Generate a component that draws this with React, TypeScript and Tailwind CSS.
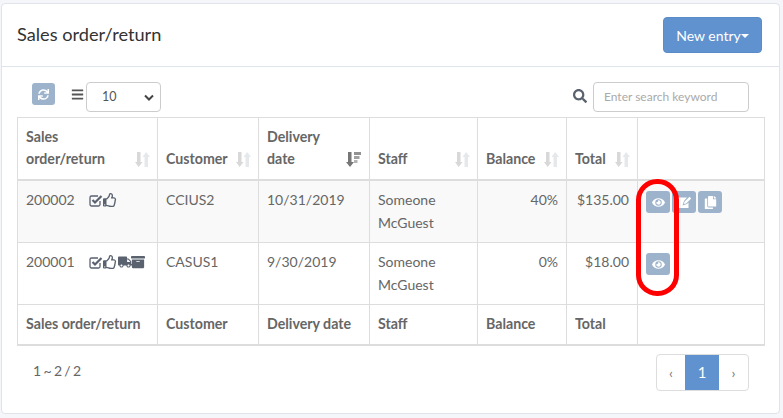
import { FaArchive, FaBars, FaCopy, FaEye, FaRegThumbsUp, FaSearch, FaSync, FaTruck } from "react-icons/fa";

function SortIcon({ active }: { active?: boolean }) {
  if (active) {
    return (
      <svg width="15" height="15" viewBox="0 0 15 15" className="absolute right-[8px] bottom-[12px]" fill="#777">
        <path d="M2 0h3.500v10H8l-4 5-4-5h2z" />
        <path d="M8 0h7v3H8z" opacity="0.8" />
        <path d="M8 4h5.500v3H8z" opacity="0.7" />
        <path d="M8 8h3.500v3H8z" opacity="0.55" />
      </svg>
    );
  }
  return (
    <svg width="15" height="15" viewBox="0 0 15 15" className="absolute right-[7px] bottom-[12px]">
      <path d="M2 0h3.500v10H7.500l-3.800 5L0 10h2z" fill="#d8d8d8" />
      <path d="M9.500 15H13V5h2l-3.800-5L7.500 5h2z" fill="#e6e9eb" />
    </svg>
  );
}

function HeadCell({ children, active }: { children: React.ReactNode; active?: boolean }) {
  return (
    <th className="relative border border-[#ddd] border-b-2 px-2 pb-[9px] pt-2 align-bottom text-left text-[14.2px] font-bold leading-[22px] text-[#666]">
      {children}
      <SortIcon active={active} />
    </th>
  );
}

function ActionButton({ children }: { children: React.ReactNode }) {
  return (
    <span className="mr-[2px] inline-flex h-[22px] w-[24px] items-center justify-center rounded-[3px] bg-[#9db3cb] text-[13px] text-white">
      {children}
    </span>
  );
}

function CheckBox() {
  return (
    <svg width="14" height="13" viewBox="0 0 14 13" fill="none" stroke="#5a6270">
      <path d="M11 7v3.500a1.500 1.500 0 0 1-1.500 1.500h-7A1.500 1.500 0 0 1 1 10.500v-7A1.500 1.500 0 0 1 2.500 2H9" strokeWidth="1.300" />
      <path d="M3.500 6l2.500 2.500L12.500 2" strokeWidth="2.200" />
    </svg>
  );
}

function EditGlyph() {
  return (
    <svg width="15" height="13" viewBox="0 0 15 13" fill="#fff">
      <path d="M1 1.500h9L7 5 5.500 9.500 10 8l1.500-1.500V12H1z" />
      <path d="M6.800 8l.7-2.300L12.500.7l1.700 1.700-5 5z" />
    </svg>
  );
}

const cell = "border border-[#ddd] px-2 py-[8px] align-top text-[14px] leading-[22.500px] text-[#666]";
const foot = "border border-[#ddd] border-b-2 px-2 py-2 text-left text-[14.2px] font-bold leading-[22px] text-[#666]";

export default function App() {
  return (
    <div className="h-[418px] overflow-hidden bg-[#f4f6f9] pl-[1px] pt-[3px] font-['Lato',sans-serif]">
      <div className="h-[411px] w-[779px] rounded-[4px] border border-[#dfe4ea] bg-white">
        <div className="flex h-[63px] items-center justify-between border-b border-[#dfe4ea] pl-[15px] pr-[17px]">
          <h1 className="text-[18.200px] font-normal text-[#333]">Sales order/return</h1>
          <button className="flex h-[36px] w-[99px] items-center justify-center rounded-[4px] border border-[#5b8cc7] bg-[#6092cf] text-[14px] text-white">
            New entry
            <span className="mt-[1px] h-0 w-0 border-x-[4px] border-t-[4px] border-x-transparent border-t-white" />
          </button>
        </div>
        <div className="px-[15px]">
          <div className="flex h-[50px] items-start justify-between px-[15px] pt-[15px]">
            <div className="flex items-start">
              <span className="mt-[1px] flex h-[22px] w-[23px] items-center justify-center rounded-[3px] bg-[#9db3cb] text-[11px] text-white">
                <FaSync />
              </span>
              <FaBars className="ml-[16px] mt-[6px] text-[13px] text-[#555]" />
              <div className="ml-[2px] flex h-[30px] w-[75px] items-center justify-between rounded-[4px] border border-[#ccc] bg-white pl-[15px] pr-[5px] pt-[1px] text-[12.500px] text-[#555]">
                10
                <svg width="12" height="8" viewBox="0 0 12 8" fill="none" stroke="#444" strokeWidth="2"><path d="M2 1.500l4 4 4-4" /></svg>
              </div>
            </div>
            <div className="flex items-start">
              <FaSearch className="mr-[6px] mt-[7px] text-[14px] text-[#5a6270]" />
              <div className="flex h-[30px] w-[156px] items-center rounded-[4px] border border-[#ccc] bg-white pl-[10px] text-[12px] text-[#aaa]">
                Enter search keyword
              </div>
            </div>
          </div>
          <table className="w-[747px] table-fixed border-collapse">
            <colgroup>
              <col className="w-[140px]" />
              <col className="w-[101px]" />
              <col className="w-[111px]" />
              <col className="w-[108px]" />
              <col className="w-[89px]" />
              <col className="w-[71px]" />
              <col className="w-[127px]" />
            </colgroup>
            <thead>
              <tr className="h-[62px]">
                <HeadCell>Sales<br />order/return</HeadCell>
                <HeadCell>Customer</HeadCell>
                <HeadCell active>Delivery<br />date</HeadCell>
                <HeadCell>Staff</HeadCell>
                <HeadCell>Balance</HeadCell>
                <HeadCell>Total</HeadCell>
                <th className="border border-[#ddd] border-b-2" />
              </tr>
            </thead>
            <tbody>
              <tr className="h-[62px] bg-[#f9f9f9]">
                <td className={cell}>
                  <div className="flex items-center">
                    200002
                    <span className="ml-[14px] flex items-center text-[14px] text-[#5a6270]"><CheckBox /><FaRegThumbsUp /></span>
                  </div>
                </td>
                <td className={cell}>CCIUS2</td>
                <td className={cell}>10/31/2019</td>
                <td className={cell}>Someone McGuest</td>
                <td className={cell + " text-right"}>40%</td>
                <td className={cell + " text-right"}>$135.00</td>
                <td className="border border-[#ddd] px-2 pt-[10px] align-top">
                  <div className="flex">
                    <ActionButton><FaEye /></ActionButton>
                    <ActionButton><EditGlyph /></ActionButton>
                    <ActionButton><FaCopy /></ActionButton>
                  </div>
                </td>
              </tr>
              <tr className="h-[62px]">
                <td className={cell}>
                  <div className="flex items-center">
                    200001
                    <span className="ml-[14px] flex items-center text-[14px] text-[#5a6270]"><CheckBox /><FaRegThumbsUp /><FaTruck className="ml-[1px]" /><FaArchive className="-ml-[1px]" /></span>
                  </div>
                </td>
                <td className={cell}>CASUS1</td>
                <td className={cell}>9/30/2019</td>
                <td className={cell}>Someone McGuest</td>
                <td className={cell + " text-right"}>0%</td>
                <td className={cell + " text-right"}>$18.00</td>
                <td className="border border-[#ddd] px-2 pt-[10px] align-top">
                  <div className="flex">
                    <ActionButton><FaEye /></ActionButton>
                  </div>
                </td>
              </tr>
            </tbody>
            <tfoot>
              <tr className="h-[40px]">
                <th className={foot}>Sales order/return</th>
                <th className={foot}>Customer</th>
                <th className={foot}>Delivery date</th>
                <th className={foot}>Staff</th>
                <th className={foot}>Balance</th>
                <th className={foot}>Total</th>
                <th className={foot} />
              </tr>
            </tfoot>
          </table>
          <div className="flex items-start justify-between px-[15px] pt-[8px]">
            <span className="ml-[1px] mt-[6px] text-[14px] text-[#666] [word-spacing:-1.25px]">1 ~ 2 / 2</span>
            <div className="flex h-[37px] overflow-hidden rounded-[4px] border border-[#ddd] text-[14px]">
              <span className="flex w-[28px] items-center justify-center text-[#777]">‹</span>
              <span className="flex w-[34px] items-center justify-center bg-[#6092cf] text-[15px] text-white">1</span>
              <span className="flex w-[29px] items-center justify-center text-[#777]">›</span>
            </div>
          </div>
        </div>
      </div>
      <div className="absolute left-[636px] top-[179px] h-[117px] w-[43px] rounded-[21px] border-[5px] border-[#f00]" />
    </div>
  );
}
